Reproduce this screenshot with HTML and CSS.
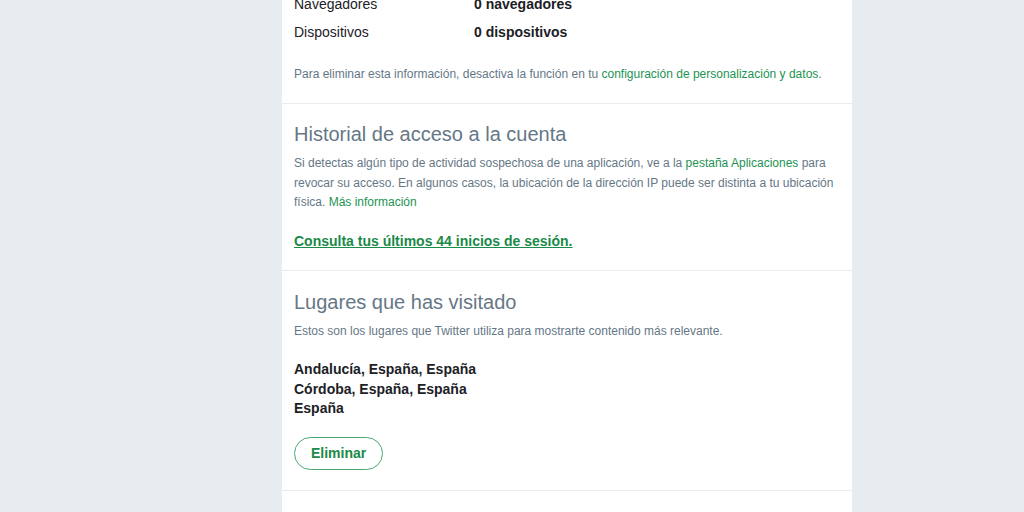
FILE: index.html
```html
<!DOCTYPE html>
<html lang="es">
<head>
<meta charset="utf-8">
<title>Tus datos de Twitter</title>
<link rel="stylesheet" href="styles.css">
</head>
<body>
<main class="page">
  <div class="card">
    <section class="section section-data">
      <div class="row"><span class="row-label">Navegadores</span><span class="row-value">0 navegadores</span></div>
      <div class="row"><span class="row-label">Dispositivos</span><span class="row-value">0 dispositivos</span></div>
      <p class="note">Para eliminar esta información, desactiva la función en tu <a href="#" class="link">configuración de personalización y datos</a>.</p>
    </section>

    <section class="section">
      <h2 class="section-title">Historial de acceso a la cuenta</h2>
      <p class="desc">Si detectas algún tipo de actividad sospechosa de una aplicación, ve a la <a href="#" class="link">pestaña Aplicaciones</a> para revocar su acceso. En algunos casos, la ubicación de la dirección IP puede ser distinta a tu ubicación física. <a href="#" class="link">Más información</a></p>
      <a href="#" class="strong-link">Consulta tus últimos 44 inicios de sesión.</a>
    </section>

    <section class="section section-places">
      <h2 class="section-title">Lugares que has visitado</h2>
      <p class="desc">Estos son los lugares que Twitter utiliza para mostrarte contenido más relevante.</p>
      <ul class="places">
        <li>Andalucía, España, España</li>
        <li>Córdoba, España, España</li>
        <li>España</li>
      </ul>
      <button class="btn" type="button">Eliminar</button>
    </section>

    <section class="section section-tail"></section>
  </div>
</main>
</body>
</html>
```

FILE: styles.css
```css
html, body {
  margin: 0;
  padding: 0;
  background: #e6ecf0;
  font-family: "Liberation Sans", Arial, sans-serif;
  color: #14171a;
  overflow: hidden;
}

.page {
  display: flex;
  justify-content: center;
  padding-left: 110px;
}

.card {
  width: 570px;
  background: #fff;
  margin-top: -19px;
  min-height: 560px;
}

.section {
  padding: 18px 12px 20px;
  border-bottom: 1px solid #e6ecf0;
}

.section-data {
  padding-top: 9px;
  padding-bottom: 21px;
}

.section-places {
  padding-top: 19px;
}

.row {
  display: flex;
  font-size: 14px;
  line-height: 18px;
  padding: 5px 0;
  color: #1c2126;
}

.row-label {
  width: 180px;
  flex: none;
}

.row-value {
  font-weight: bold;
}

.note {
  margin: 20px 0 0;
  font-size: 12px;
  line-height: 16px;
  color: #657786;
}

.link {
  color: #1c9352;
  text-decoration: none;
}

.section-title {
  margin: 0;
  font-size: 20px;
  line-height: 24px;
  font-weight: normal;
  color: #657786;
}

.desc {
  margin: 8px 0 0;
  font-size: 12px;
  line-height: 19.5px;
  color: #657786;
}

.strong-link {
  display: block;
  margin-top: 19px;
  font-size: 14px;
  line-height: 18px;
  font-weight: bold;
  color: #1a8a48;
  text-decoration: underline;
}

.places {
  list-style: none;
  margin: 19px 0 0;
  padding: 0;
  font-size: 14px;
  line-height: 19.5px;
  font-weight: bold;
  color: #1c2126;
}

.btn {
  display: block;
  margin-top: 18px;
  height: 33px;
  padding: 0 16px;
  border: 1px solid #4aa873;
  border-radius: 17px;
  background: #fff;
  color: #1a8a48;
  font-family: "Liberation Sans", Arial, sans-serif;
  font-size: 14px;
  font-weight: bold;
}

.section-tail {
  border-bottom: none;
  height: 40px;
}
```
